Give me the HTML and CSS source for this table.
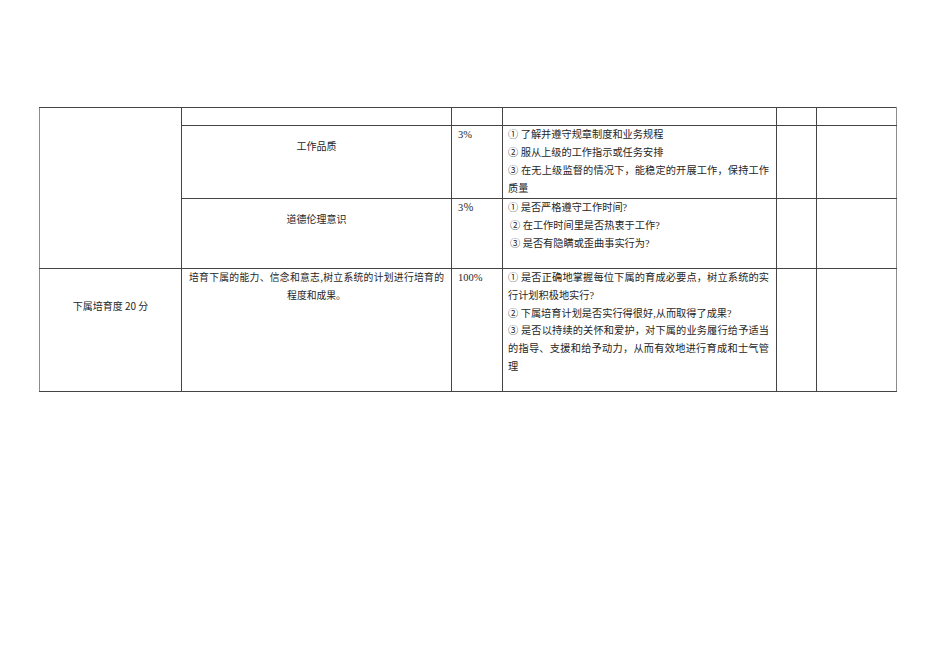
FILE: index.html
```html
<!DOCTYPE html>
<html lang="zh-CN">
<head>
<meta charset="utf-8">
<title>考核表</title>
<link rel="stylesheet" href="styles.css">
</head>
<body>
<table class="sheet">
  <colgroup>
    <col class="c1"><col class="c2"><col class="c3"><col class="c4"><col class="c5"><col class="c6">
  </colgroup>
  <tr class="r1">
    <td class="cat g" rowspan="3"></td>
    <td class="item g"></td>
    <td class="pct"></td>
    <td class="desc g"></td>
    <td class="blank"></td>
    <td class="blank g"></td>
  </tr>
  <tr class="r2">
    <td class="item g"><div class="center-label">工作品质</div></td>
    <td class="pct">3%</td>
    <td class="desc g">
      <span class="ln">① 了解并遵守规章制度和业务规程</span>
      <span class="ln">② 服从上级的工作指示或任务安排</span>
      <span class="ln j">③ 在无上级监督的情况下，能稳定的开展工作，保持工作</span>
      <span class="ln">质量</span>
    </td>
    <td class="blank"></td>
    <td class="blank g"></td>
  </tr>
  <tr class="r3">
    <td class="item g"><div class="center-label">道德伦理意识</div></td>
    <td class="pct">3％</td>
    <td class="desc g">
      <span class="ln">① 是否严格遵守工作时间?</span>
      <span class="ln ind">② 在工作时间里是否热衷于工作?</span>
      <span class="ln ind">③ 是否有隐瞒或歪曲事实行为?</span>
    </td>
    <td class="blank"></td>
    <td class="blank g"></td>
  </tr>
  <tr class="r4">
    <td class="cat g"><div class="cat-label">下属培育度 20 分</div></td>
    <td class="item g">
      <span class="ln2 j">培育下属的能力、信念和意志,树立系统的计划进行培育的</span>
      <span class="ln2 mid">程度和成果。</span>
    </td>
    <td class="pct">100%</td>
    <td class="desc g tight">
      <span class="ln j">① 是否正确地掌握每位下属的育成必要点，树立系统的实</span>
      <span class="ln">行计划积极地实行?</span>
      <span class="ln">② 下属培育计划是否实行得很好,从而取得了成果?</span>
      <span class="ln j">③ 是否以持续的关怀和爱护，对下属的业务履行给予适当</span>
      <span class="ln j">的指导、支援和给予动力，从而有效地进行育成和士气管</span>
      <span class="ln">理</span>
    </td>
    <td class="blank"></td>
    <td class="blank g"></td>
  </tr>
</table>
</body>
</html>
```
FILE: styles.css
```css
html, body {
  margin: 0;
  padding: 0;
  background: #ffffff;
}

body {
  font-family: "Liberation Serif", "Noto Sans CJK SC", serif;
  color: #262626;
}

.sheet {
  margin: 107px 0 0 39px;
  border-collapse: collapse;
  table-layout: fixed;
  width: 858px;
}

.c1 { width: 142px; }
.c2 { width: 270px; }
.c3 { width: 51px; }
.c4 { width: 274px; }
.c5 { width: 40px; }
.c6 { width: 80px; }

.sheet td {
  border: 1px solid #444444;
  padding: 0;
  vertical-align: top;
}

.sheet td.g {
  border-left-color: #8c8c8c;
}

.sheet td.blank.g {
  border-right-color: #8c8c8c;
}

.r1 { height: 18px; }
.r2 { height: 71px; }
.r3 { height: 70px; }
.r4 { height: 123px; }

.center-label {
  font-family: "Noto Sans CJK SC", sans-serif;
  font-size: 10px;
  line-height: 18px;
  text-align: center;
  padding-top: 11px;
}

.cat-label {
  font-family: "Noto Sans CJK SC", sans-serif;
  font-size: 10px;
  line-height: 18px;
  text-align: center;
  padding-top: 28px;
}

.pct {
  font-size: 10.5px;
  line-height: 17px;
  padding-left: 6px !important;
}

.desc {
  font-family: "Liberation Serif", "Noto Sans CJK SC", serif;
  font-size: 10.2px;
  line-height: 18px;
  padding: 0 7px 0 5px !important;
}

.desc.tight {
  line-height: 17.8px;
}

.ln {
  display: block;
  white-space: nowrap;
}

.ln.j {
  text-align: justify;
  text-align-last: justify;
}

.ln.ind {
  padding-left: 2px;
}

.item .ln2 {
  display: block;
  font-family: "Noto Sans CJK SC", sans-serif;
  font-size: 9.8px;
  line-height: 17.5px;
  white-space: nowrap;
  padding: 0 7px;
}

.ln2.j {
  text-align: justify;
  text-align-last: justify;
}

.ln2.mid {
  text-align: center;
}
```
